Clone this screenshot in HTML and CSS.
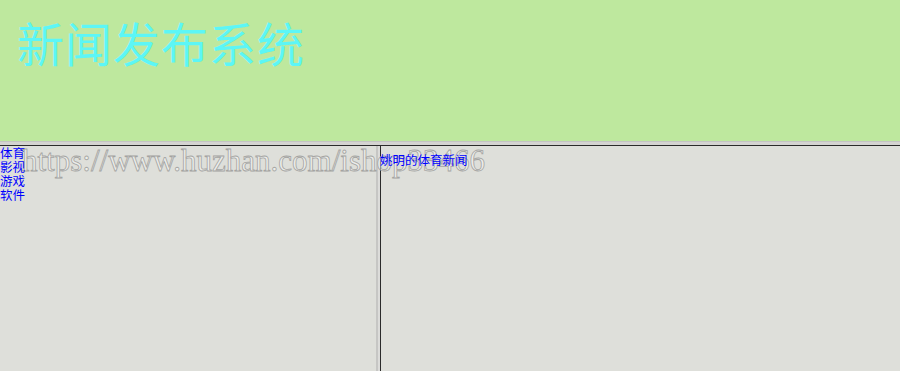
FILE: index.html
```html
<!DOCTYPE html>
<html lang="zh-CN">
<head>
  <meta charset="UTF-8">
  <title>新闻发布系统</title>
  <link rel="stylesheet" href="styles.css">
</head>
<body>
  <div class="top">
    <h1>新闻发布系统</h1>
  </div>
  <div class="hsplit"></div>
  <div class="main">
    <div class="left">
      <a href="#">体育</a>
      <a href="#">影视</a>
      <a href="#">游戏</a>
      <a href="#">软件</a>
    </div>
    <div class="vsplit"></div>
    <div class="right">
      <a href="#">姚明的体育新闻</a>
    </div>
    <div class="mark">https://www.huzhan.com/ishop33466</div>
  </div>
</body>
</html>
```

FILE: styles.css
```css
* {
  box-sizing: border-box;
}
html, body {
  height: 100%;
}
body {
  margin: 0;
  display: flex;
  flex-direction: column;
  font-family: "Noto Sans CJK SC", sans-serif;
  background: #dedfda;
  overflow: hidden;
}
.top {
  height: 141px;
  background: #bee89e;
  padding: 14px 0 0 17px;
}
.top h1 {
  margin: 0;
  font-family: "Noto Sans CJK SC", sans-serif;
  font-weight: normal;
  font-size: 47px;
  line-height: 56px;
  letter-spacing: 1px;
  color: #5cf6f6;
}
.hsplit {
  height: 5px;
  background: #d4d4d1;
  border-top: 1px solid #c4c4c2;
  border-bottom: 1px solid #2b2b2b;
}
.main {
  flex: 1;
  display: flex;
  position: relative;
}
.left {
  width: 376px;
  display: flex;
  flex-direction: column;
  align-items: flex-start;
}
.vsplit {
  width: 5px;
  background: #dcdcda;
  border-left: 2px solid #c6c6c4;
  border-right: 1px solid #2b2b2b;
}
.right {
  flex: 1;
}
.left a, .right a {
  position: relative;
  z-index: 1;
  color: #0000ff;
  text-decoration: none;
  font-size: 12.5px;
  line-height: 14px;
}
.right a {
  margin-left: -1px;
}
.mark {
  position: absolute;
  left: 22px;
  top: -2px;
  font-family: "Liberation Serif", serif;
  font-size: 31px;
  line-height: 34px;
  color: rgba(255, 255, 255, 0.45);
  -webkit-text-stroke: 0.8px #a4a4a2;
  white-space: nowrap;
  pointer-events: none;
}
```
